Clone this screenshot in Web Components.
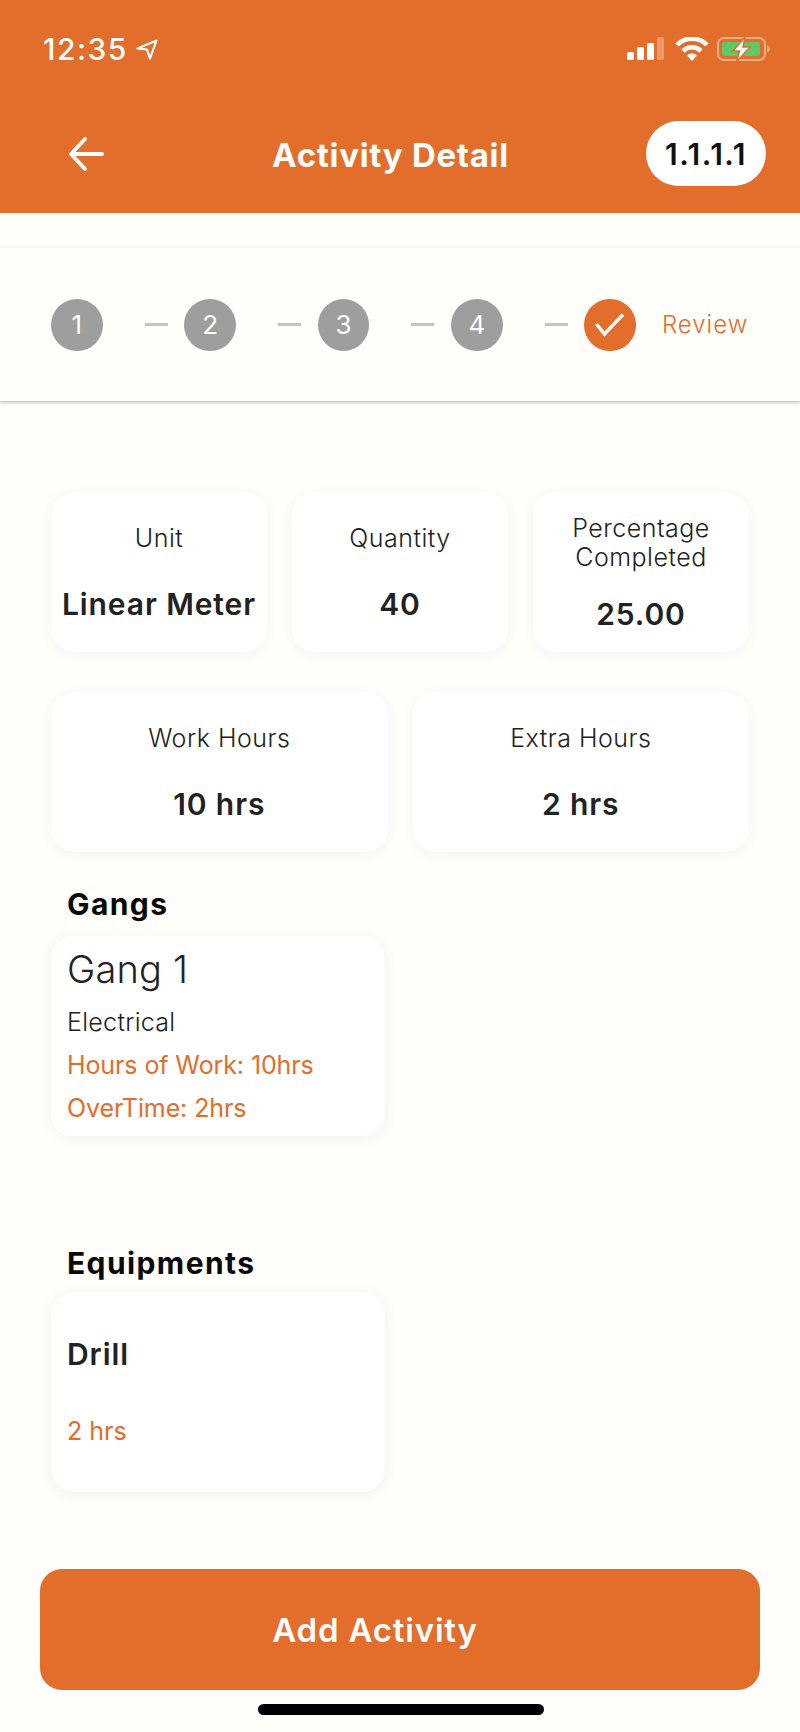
<!DOCTYPE html>
<html>
<head>
<meta charset="utf-8">
<title>Activity Detail</title>
<style>
html, body { margin: 0; padding: 0; }
body { width: 800px; height: 1732px; overflow: hidden; background: #fffefb; font-family: Inter, "Liberation Sans", sans-serif; color: #222; }
.rows { display: flex; flex-direction: column; padding: 91px 51px 0; gap: 40px; }
.row { display: flex; gap: 25px; }
</style>
</head>
<body>
<app-header code="1.1.1.1" heading="Activity Detail"></app-header>
<step-tracker></step-tracker>
<div class="rows">
	<div class="row">
		<stat-card label="Unit" value="Linear Meter"></stat-card>
		<stat-card label="Quantity" value="40"></stat-card>
		<stat-card label="Percentage Completed" value="25.00"></stat-card>
	</div>
	<div class="row">
		<stat-card label="Work Hours" value="10 hrs"></stat-card>
		<stat-card label="Extra Hours" value="2 hrs"></stat-card>
	</div>
</div>
<list-section heading="Gangs" top="35" under="15">
	<gang-card name="Gang 1" trade="Electrical" hours="Hours of Work: 10hrs" extra="OverTime: 2hrs"></gang-card>
</list-section>
<list-section heading="Equipments" top="110" under="12">
	<equip-card name="Drill" time="2 hrs"></equip-card>
</list-section>
<action-button>Add Activity</action-button>
<home-bar></home-bar>

<script>
class AppHeader extends HTMLElement {
	constructor() {
		super();
		this.attachShadow({mode:'open'});
		this.shadowRoot.innerHTML = this.template;
	}

	get template() {
		return `
			<style>
			:host { display: block; height: 213px; background: #e36d2b; color: #fff; }
			.status { height: 98px; box-sizing: border-box; padding: 32px 30px 0 43px; display: flex; justify-content: space-between; align-items: flex-start; }
			.time { display: flex; align-items: center; gap: 8px; font: 500 30px/34px Inter, sans-serif; letter-spacing: 1.5px; }
			.nav { display: grid; grid-template-columns: 1fr auto 1fr; align-items: center; height: 65px; margin-top: 23px; padding: 0 34px 0 15px; }
			.back { margin-left: 53px; display: block; }
			h1 { margin: 0; padding-top: 3px; font: 700 33px/40px Inter, sans-serif; letter-spacing: 0.7px; }
			.code { justify-self: end; width: 120px; height: 65px; border-radius: 33px; background: #fff; color: #111; display: flex; align-items: center; justify-content: center; font: 600 30px/34px Inter, sans-serif; letter-spacing: 1.5px; }
			</style>
			<div class="status">
				<div class="time">12:35
					<svg width="22" height="21" viewBox="0 0 22 21" fill="none" stroke="#fff" stroke-width="2.2" stroke-linejoin="round"><path d="M20.500 1.500 1.500 9.500l9.500 1 3 9z"/></svg>
				</div>
				<svg width="143" height="26" viewBox="0 0 143 26" style="margin-top:5px">
					<g fill="#fff">
						<rect x="0" y="15" width="7" height="8" rx="1.5"/>
						<rect x="10" y="10" width="7" height="13" rx="1.5"/>
						<rect x="20" y="6" width="7" height="17" rx="1.5"/>
						<rect x="30" y="0" width="7" height="23" rx="1.5" opacity=".3"/>
					</g>
					<g fill="none" stroke="#fff" stroke-width="4.6">
						<path d="M50 8C58 -0.5 72 -0.5 80 8"/>
						<path d="M56 14C61 9 69 9 74 14"/>
					</g>
					<path d="M60 18.5c3-2.6 7-2.6 10 0L65 24z" fill="#fff"/>
					<rect x="91" y="1" width="47" height="22" rx="6" fill="none" stroke="#fff" stroke-opacity=".45" stroke-width="2"/>
					<path d="M140 8.500c2 .6 3 2 3 3.500s-1 2.900-3 3.500z" fill="#fff" fill-opacity=".45"/>
					<rect x="95" y="5" width="38" height="14" rx="3" fill="#5fc968"/>
					<path d="M118 0 106 14h6.500l-3 11L123 10h-7z" fill="#fff" stroke="#e36d2b" stroke-width="1.500"/>
				</svg>
			</div>
			<div class="nav">
				<svg class="back" width="36" height="36" viewBox="0 0 36 36" fill="none" stroke="#fff" stroke-width="4" stroke-linecap="round" stroke-linejoin="round"><path d="M34 18H4M17 3 3 18l14 15"/></svg>
				<h1>${this.getAttribute('heading')}</h1>
				<div class="code">${this.getAttribute('code')}</div>
			</div>
		`;
	}
}

class StepTracker extends HTMLElement {
	constructor() {
		super();
		this.attachShadow({mode:'open'});
		let steps = '';
		for (const n of [1, 2, 3, 4]) {
			steps += `<span class="dot">${n}</span><span class="dash"></span>`;
		}
		this.shadowRoot.innerHTML = `
			<style>
			:host { display: flex; align-items: center; box-sizing: border-box; height: 155px; margin-top: 33px; padding-left: 51px; border-top: 2px solid #f5f5f2; box-shadow: 0 2px 3px rgba(0,0,0,.22); background: #fffefb; }
			.dot { width: 51.500px; height: 52px; border-radius: 50%; background: #9e9e9c; color: #fff; display: flex; align-items: center; justify-content: center; font: 400 26px/30px Inter, sans-serif; }
			.dash { width: 23px; height: 3px; background: #c4c4c2; margin: 0 16.85px 0 42px; }
			.dot.done { background: #e36d2b; }
			.label { margin-left: 26px; color: #e36d2b; font: 300 24px/30px Inter, sans-serif; letter-spacing: 1px; }
			</style>
			${steps}
			<span class="dot done"><svg width="30" height="24" viewBox="0 0 30 24" fill="none" stroke="#fff" stroke-width="3.500"><path d="M1.500 11l8 10L28 1.500"/></svg></span>
			<span class="label">Review</span>
		`;
	}
}

class StatCard extends HTMLElement {
	constructor() {
		super();
		this.attachShadow({mode:'open'});
		this.shadowRoot.innerHTML = `
			<style>
			:host { display: flex; flex: 1 1 0; flex-direction: column; justify-content: space-evenly; align-items: center; text-align: center; height: 160px; box-sizing: border-box; padding: 1px 2px 0; background: #fff; border-radius: 22px; box-shadow: 0 2px 12px rgba(60,50,30,.06); }
			.label { font: 300 25px/29px Inter, sans-serif; letter-spacing: 0.5px; color: #222; }
			.value { margin-top: 3px; font: 600 30px/34px Inter, sans-serif; letter-spacing: 0.9px; color: #222; }
			</style>
			<div class="label">${this.getAttribute('label')}</div>
			<div class="value">${this.getAttribute('value')}</div>
		`;
	}
}

class ListSection extends HTMLElement {
	constructor() {
		super();
		this.attachShadow({mode:'open'});
		this.shadowRoot.innerHTML = `
			<style>
			:host { display: block; padding: ${this.getAttribute('top')}px 0 0 51px; }
			h2 { margin: 0 0 ${this.getAttribute('under')}px 16px; font: 650 30px/34px Inter, sans-serif; letter-spacing: 1.4px; color: #0a0a0a; }
			</style>
			<h2>${this.getAttribute('heading')}</h2>
			<slot></slot>
		`;
	}
}

const cardBox = `
	:host { display: flex; flex-direction: column; box-sizing: border-box; width: 334px; height: 200px; padding: 0 16px; background: #fff; border-radius: 22px; box-shadow: 0 2px 14px rgba(60,50,30,.07); }
`;

class GangCard extends HTMLElement {
	constructor() {
		super();
		this.attachShadow({mode:'open'});
		this.shadowRoot.innerHTML = `
			<style>
			${cardBox}
			:host { padding-top: 10px; }
			.name { margin-bottom: 9px; font: 300 38px/46px Inter, sans-serif; letter-spacing: 0.2px; color: #222; }
			.line { font: 350 25px/43px Inter, sans-serif; letter-spacing: 0.3px; color: #222; }
			.line.hot { font-weight: 400; letter-spacing: -0.1px; color: #e36d2b; }
			</style>
			<div class="name">${this.getAttribute('name')}</div>
			<div class="line">${this.getAttribute('trade')}</div>
			<div class="line hot">${this.getAttribute('hours')}</div>
			<div class="line hot">${this.getAttribute('extra')}</div>
		`;
	}
}

class EquipCard extends HTMLElement {
	constructor() {
		super();
		this.attachShadow({mode:'open'});
		this.shadowRoot.innerHTML = `
			<style>
			${cardBox}
			:host { justify-content: center; gap: 43px; }
			.name { font: 600 30px/34px Inter, sans-serif; letter-spacing: 0.9px; color: #222; }
			.time { font: 400 25px/34px Inter, sans-serif; color: #e36d2b; }
			</style>
			<div class="name">${this.getAttribute('name')}</div>
			<div class="time">${this.getAttribute('time')}</div>
		`;
	}
}

class ActionButton extends HTMLElement {
	constructor() {
		super();
		this.attachShadow({mode:'open'});
		this.shadowRoot.innerHTML = `
			<style>
			:host { display: flex; align-items: center; justify-content: center; box-sizing: border-box; width: 720px; height: 121px; margin: 77px 0 0 40px; padding: 1px 50px 0 0; background: #e36d2b; border-radius: 22px; color: #fff; font: 600 33px/40px Inter, sans-serif; letter-spacing: 0.8px; }
			</style>
			<slot></slot>
		`;
	}
}

class HomeBar extends HTMLElement {
	constructor() {
		super();
		this.attachShadow({mode:'open'}).innerHTML = `
			<style>
			:host { display: block; width: 286px; height: 11px; margin: 14px 0 0 258px; border-radius: 6px; background: #000; }
			</style>
		`;
	}
}

customElements.define('app-header', AppHeader);
customElements.define('step-tracker', StepTracker);
customElements.define('stat-card', StatCard);
customElements.define('list-section', ListSection);
customElements.define('gang-card', GangCard);
customElements.define('equip-card', EquipCard);
customElements.define('action-button', ActionButton);
customElements.define('home-bar', HomeBar);
</script>
</body>
</html>
